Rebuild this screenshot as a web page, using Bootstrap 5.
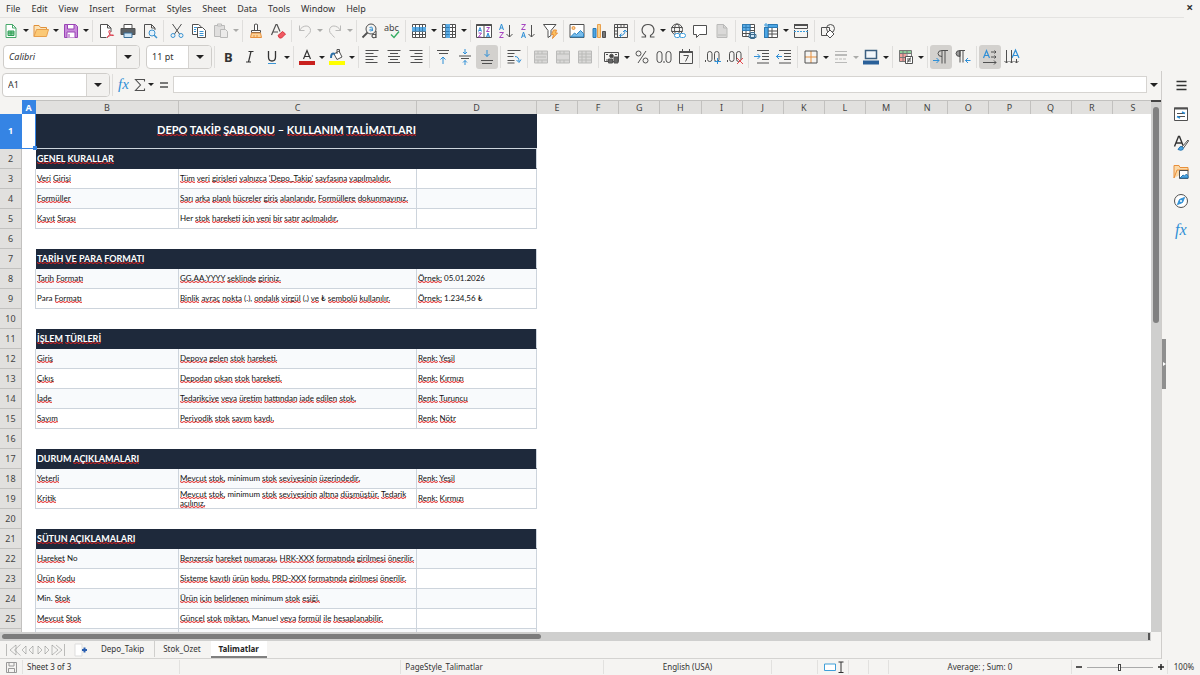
<!DOCTYPE html>
<html lang="tr">
<head>
<meta charset="utf-8">
<meta name="viewport" content="width=device-width, initial-scale=1">
<title>Talimatlar</title>
<link href="https://cdn.jsdelivr.net/npm/bootstrap@5.3.0/dist/css/bootstrap.min.css" rel="stylesheet">
<style>
body{font:9px/12px "Noto Sans","Open Sans",sans-serif;background:#f5f4f2;color:#333;height:100vh;overflow:hidden}
button,input{font:inherit;color:inherit}
button{border:0;background:none;padding:0}
a{color:inherit;text-decoration:none}
svg{display:block;overflow:visible;fill:none;stroke:#505050;stroke-width:1}
.menubar{height:18px;gap:11px;padding:1px 0 0 6px;margin-right:16px;border-bottom:1px solid #e4e3e1}
.closer{right:7px;top:3px;font-weight:700;font-size:12px;line-height:10px}
.tools{height:27px}
.tools.fmt{height:28px}
.tb{width:22px;height:24px;display:flex;align-items:center;justify-content:center;border-radius:3px;flex:none}
.tb.slim{width:18px}
.tb.slimmer{width:14px}
.tb svg{width:16px;height:16px}
.tb.on{background:#d3d1ce}
.dd{width:8px;height:24px;flex:none;display:flex;align-items:center;justify-content:center}
.dd::after,.cdrop::after{content:"";border:3px solid transparent;border-top:3px solid #222;border-bottom:0}
.off{opacity:.35}
.vr2{width:5px;height:22px;flex:none;background:linear-gradient(#dfdedc,#dfdedc) 2px 0/1px 100% no-repeat}
.combo{height:24px;border:1px solid #cfcdca;border-radius:4px;overflow:hidden;background:#fff;flex:none}
.combo.fontname{width:137px;margin-left:3px}
.combo.fontsize{width:66px;margin-left:6px}
.combo.namebox{width:108px}
.combo input{border:0;outline:0;padding:0 5px;min-width:0;flex:1;background:none}
.cdrop{width:23px;border-left:1px solid #d6d4d1;background:#f2f1ef;display:flex;align-items:center;justify-content:center}
.cdrop::after{border-width:4px 4px 0}
.cdrop.expand{width:14px;border:0;background:none}
.fbar{height:29px;padding:2px 0 4px 2px}
.fline{height:17px;border:1px solid #d6d4d1;background:#fff;outline:0}
.side{width:39px;border-left:1px solid #cfcdcb;padding-top:5px;gap:11px}
.side svg{width:16px;height:16px}
.side button{height:18px}
.handle{left:0;top:268px;width:4px;height:50px;background:#8f8f8f}
.handle::after{content:"";position:absolute;left:1px;top:23px;border:2px solid transparent;border-left:3px solid #fff;border-right:0}
.grid{table-layout:fixed;border-collapse:separate;border-spacing:0;width:calc(100% + 3px);background:#fff}
.grid .c-no{width:22px}.grid .c-a{width:14px}.grid .c-b{width:143px}.grid .c-c{width:238px}.grid .c-d{width:120px}
.gridwrap{width:0}
.grid thead th{height:14px;padding:0;background:#e1e0de;border-right:1px solid #c2c1bf;border-top:1px solid #c2c1bf;font-weight:400;text-align:center;line-height:12px;color:#444}
.grid tbody th{padding:0;background:#e1e0de;border-right:1px solid #c2c1bf;border-bottom:1px solid #c2c1bf;font-weight:400;text-align:center;color:#444}
.grid thead th.corner{background:#f5f4f2;border-color:#f5f4f2}
.grid thead th.cur,.grid tbody th.cur{background:#3584e4;color:#fff;font-weight:700;border-color:#3584e4}
.grid tbody tr{height:20px}
.grid tbody tr.title-row{height:35px}
.grid td{padding:0;font:8px/9px Lato,Carlito,sans-serif;color:#111;vertical-align:middle}
.grid td.cell{border-right:1px solid #cdd4dc;border-bottom:1px solid #cdd4dc;padding-left:1px}
.grid td.edge{border-right:1px solid #cdd4dc}
.grid tr.alt td.cell{background:#f8fafc}
.grid td.sec{background:#1e293b;color:#fff;font-weight:700;font-size:9px;border-color:#cdd4dc;border-bottom-color:#1e293b}
.grid td.ttl{background:#1e293b;color:#fff;font-weight:700;font-size:11px;line-height:14px;text-align:center;padding-bottom:3px;border-bottom:1px solid #cdd4dc}
.grid td.a1{border-right:1px solid #3584e4;border-bottom:1px solid #3584e4;position:relative}
.a1::after{content:"";position:absolute;right:-2px;bottom:-2px;width:4px;height:4px;background:#3584e4}
.sp{background:url("data:image/svg+xml,%3Csvg xmlns='http://www.w3.org/2000/svg' width='4' height='2'%3E%3Cpath d='M0 .5L2 1.5L4 .5' fill='none' stroke='%23e02020' stroke-width='1'/%3E%3C/svg%3E") left bottom/4px 2px repeat-x}
.vbar{width:10px;background:#cfcfce;padding:5px 2px 0;border-top:2px solid #444}
.vbar div{height:216px;border-radius:3px;background:#808080}
.hbar{height:9px;background:#cfcfce;padding:2px;margin-right:10px}
.hbar div{width:47%;height:5px;border-radius:3px;background:#7c7c7c}
.hbar i{width:2px;height:7px;background:#555;margin-right:-1px;margin-top:-1px}
.tabs{height:18px;border-bottom:1px solid #d4d3d1;font-size:8px}
.tabs svg.nav-arrows{margin-left:4px}
.tabs button{width:23px;padding-left:4px}
.tabs a{padding:0 10px;height:16px;line-height:16px;color:#333}
.tabs a+a{border-left:1px solid #d0cfcd;padding-left:8px}
.tabs a.live{background:#fff;font-weight:700;color:#222;padding:0 8px;border-left:0;border-bottom:2px solid #808080;height:17px}
.status{height:16px;font-size:8px;white-space:nowrap}
.status>*{height:14px;line-height:14px}
.status>*+*{border-left:1px solid #e2e1df}
.s-save{width:22px}.s-sheet{width:157px}.s-grow{flex:223 1 0}.s-page{flex:200 1 0}.s-lang{flex:169 1 0}
.s-ins{width:46px}.s-sel{width:31px}.s-small{width:20px}.s-sum{width:183px}.s-zoom{width:96px;gap:4px}.s-pct{width:33px}
.zoom{appearance:none;width:66px;height:10px;margin:0;background:linear-gradient(#aaa,#aaa) 0 50%/100% 1px no-repeat}
.zoom::-webkit-slider-thumb{appearance:none;width:3px;height:7px;border:1px solid #444;background:#fff}
</style>
</head>
<body class="d-flex flex-column">
<nav class="menubar d-flex align-items-center position-relative">
<a href="#">File</a><a href="#">Edit</a><a href="#">View</a><a href="#">Insert</a><a href="#">Format</a><a href="#">Styles</a><a href="#">Sheet</a><a href="#">Data</a><a href="#">Tools</a><a href="#">Window</a><a href="#">Help</a>
</nav>
<button class="closer position-absolute" aria-label="Close">×</button>

<div class="tools d-flex align-items-center" role="toolbar" aria-label="Standard">
<button class="tb" aria-label="New"><svg viewBox="0 0 16 16"><path d="M3 1.500h6.500l3.500 3.500v9.500h-10z" stroke="#47a86a" fill="#fff"/><path d="M9.500 1.500v3.500h3.500" stroke="#47a86a"/><path d="M5 8h6v4.500h-6zM5 10h6M8 8v4" stroke="#2e9e55" fill="#8fd1a5"/></svg></button><button class="dd" aria-label="New options"></button>
<button class="tb" aria-label="Open"><svg viewBox="0 0 16 16"><path d="M1 13.500v-11h5l1.500 2h6v2" stroke="#e0913a" fill="#fbe3b8"/><path d="M1 13.500l2.500-7h12l-2 7z" stroke="#e8a04c" fill="#fbc976"/></svg></button><button class="dd" aria-label="Open options"></button>
<button class="tb" aria-label="Save"><svg viewBox="0 0 16 16"><path d="M1.500 1.500h11l2 2v11h-13z" stroke="#9a45b5" fill="#c98adb"/><path d="M4.500 1.500h6.500v4.500h-6.500zM4 14.500v-5.500h8v5.500" fill="#fff" stroke="#9a45b5"/><path d="M6 11v3" stroke="#9a45b5"/></svg></button><button class="dd" aria-label="Save options"></button><span class="vr2"></span>
<button class="tb" aria-label="Export PDF"><svg viewBox="0 0 16 16"><path d="M13 9v-4l-3.500-3.500h-7v13h6" fill="#fff"/><path d="M9.500 1.500v3.500h3.500"/><path d="M9 14.500c3-2 4-7 2.500-7s-.5 5 3.500 5c2 0-1-2-6 2z" stroke="#dc3b4b"/></svg></button>
<button class="tb" aria-label="Print"><svg viewBox="0 0 16 16"><path d="M4 5v-3.500h8v3.500" fill="#fff"/><path d="M1 5.500h14v6h-14z" fill="#5b6165"/><path d="M4 10h8v4.500h-8z" fill="#cfe6f7" stroke="#3a6f98"/></svg></button>
<button class="tb" aria-label="Print preview"><svg viewBox="0 0 16 16"><path d="M8 14.500h-5.500v-13h7l3.500 3.500v2M9.500 1.500v3.500h3.500"/><circle cx="10" cy="10" r="3" stroke="#3f94cf" fill="#e3f1fb"/><path d="M12 12l3 3" stroke="#3f94cf" stroke-width="1.500"/></svg></button><span class="vr2"></span>
<button class="tb" aria-label="Cut"><svg viewBox="0 0 16 16"><path d="M3.500 1l7 10M12.500 1l-7 10"/><circle cx="4" cy="12.500" r="2" stroke="#3a94d4"/><circle cx="12" cy="12.500" r="2" stroke="#3a94d4"/></svg></button>
<button class="tb" aria-label="Copy"><svg viewBox="0 0 16 16"><path d="M6 11.500h-4.500v-10h6l3 2.500" fill="#fff"/><path d="M6.500 4.500h5l3 3v7h-8z" fill="#fff"/><path d="M3 4.500h3M3 6.500h2M3 8.500h2M8.500 8.500h4M8.500 10.500h4M8.500 12.500h4" stroke="#3a94d4"/></svg></button>
<button class="tb off" aria-label="Paste"><svg viewBox="0 0 16 16"><path d="M7 13.500h-5.500v-11h10v4" fill="#bbb"/><path d="M4.500 1h4v2h-4zM7.500 6.500h5l2 2v6h-7z" fill="#ddd"/></svg></button><button class="dd off" aria-label="Paste options"></button><span class="vr2"></span>
<button class="tb" aria-label="Clone formatting"><svg viewBox="0 0 16 16"><path d="M6.500 7v-5.500q1.500-1 3 0v5.500M3.500 7.500h9v2h-9z" fill="#fff"/><path d="M3.500 10l-1 4.500h11l-1-4.500z" stroke="#e8903c" fill="#fbd39a"/><path d="M6 12v2M9 12v2" stroke="#e8903c"/></svg></button>
<button class="tb" aria-label="Clear formatting"><svg viewBox="0 0 16 16"><path d="M1.500 12l4.500-10.500h1l3 7M3 9h5" stroke-width="1.200"/><path d="M8 12.500l4.500-4 3 2.500-4 4h-2z" fill="#ef5a62" stroke="#d9333f"/></svg></button><span class="vr2"></span>
<button class="tb off" aria-label="Undo"><svg viewBox="0 0 16 16"><path d="M2.500 2.500v5h5M2.500 7.500c3-6 11-6 11 0 0 3-3 4-5 7"/></svg></button><button class="dd off" aria-label="Undo list"></button>
<button class="tb off" aria-label="Redo"><svg viewBox="0 0 16 16"><path d="M13.500 2.500v5h-5M13.500 7.500c-3-6-11-6-11 0 0 3 3 4 5 7"/></svg></button><button class="dd off" aria-label="Redo list"></button><span class="vr2"></span>
<button class="tb" aria-label="Find and replace"><svg viewBox="0 0 16 16"><circle cx="9" cy="6" r="5"/><path d="M5.500 9.500l-5 5" stroke-width="1.800"/><path d="M7.500 4.500q3-1.500 3 1v2.500M10.500 6q-3 0-3 1.200t3 .3" stroke="#3a94d4"/><path d="M14 8v7M14 12q-4-2-4 1t4 1" stroke="#333"/></svg></button>
<button class="tb" aria-label="Spelling"><svg viewBox="0 0 16 16"><text x="0" y="8" font-size="9" fill="#444" stroke="none">abc</text><path d="M7 11.500l3 3 5-6" stroke="#35ad63" stroke-width="1.400"/></svg></button><span class="vr2"></span>
<button class="tb" aria-label="Row"><svg viewBox="0 0 16 16"><path d="M1.500 1.500h13v13h-13zM1.500 4.500h13M1.500 8.500h13M1.500 11.500h13M4.500 1.500v13M8.500 1.500v13M11.500 1.500v13" fill="#fff"/><path d="M1 4h14v4.500h-14z" fill="#5babe4" stroke="none"/><path d="M4.500 4v4M8.500 4v4M11.500 4v4" stroke="#2f7cb5"/></svg></button><button class="dd" aria-label="Row options"></button>
<button class="tb" aria-label="Column"><svg viewBox="0 0 16 16"><path d="M1.500 1.500h13v13h-13zM1.500 4.500h13M1.500 8.500h13M1.500 11.500h13M4.500 1.500v13M8.500 1.500v13M11.500 1.500v13" fill="#fff"/><path d="M4.500 1h4.500v14h-4.500z" fill="#5babe4" stroke="none"/><path d="M4.500 4.500h4M4.500 8.500h4M4.500 11.500h4" stroke="#2f7cb5"/></svg></button><button class="dd" aria-label="Column options"></button><span class="vr2"></span>
<button class="tb" aria-label="Sort"><svg viewBox="0 0 16 16"><path d="M.5 1.500h15v13h-15zM8 1.500v13" fill="#fff"/><path d="M.5 2h15" stroke-width="2"/><path d="M2.500 8.500l1.500-4 1.500 4M3 7.500h2M10.500 14l1.500-4 1.500 4M11 13h2" stroke="#2f8fd6"/><path d="M2.500 10h3l-3 4h3M10.500 4.500h3l-3 4h3" stroke="#a646c0"/></svg></button>
<button class="tb" aria-label="Sort ascending"><svg viewBox="0 0 16 16"><path d="M1.500 7l2-6 2 6M2 5h3" stroke="#2f8fd6"/><path d="M1.500 9.500h4l-4 5h4" stroke="#a646c0"/><path d="M11.500 2v12M8.500 11l3 3 3-3"/></svg></button>
<button class="tb" aria-label="Sort descending"><svg viewBox="0 0 16 16"><path d="M1.500 15l2-6 2 6M2 13h3" stroke="#2f8fd6"/><path d="M1.500 1.500h4l-4 5h4" stroke="#a646c0"/><path d="M11.500 2v12M8.500 11l3 3 3-3"/></svg></button>
<button class="tb" aria-label="AutoFilter"><svg viewBox="0 0 16 16"><path d="M1.500 1.500h12.500l-5 6v5l-3 2v-7z" fill="#fff"/><path d="M11.500 7h3l-1 3h2l-5 5.500 1-4h-2z" fill="#fbc05e" stroke="#e8903c"/></svg></button><span class="vr2"></span>
<button class="tb" aria-label="Insert image"><svg viewBox="0 0 16 16"><path d="M1 1.500h14v13h-14z" fill="#fff"/><circle cx="4.500" cy="5" r="1.500" stroke="#e8903c" fill="#fbd39a"/><path d="M1.500 14l4-4 2 1.500 4-4 3 3v3.500z" fill="#78bdec" stroke="#2f86c4"/></svg></button>
<button class="tb" aria-label="Insert chart"><svg viewBox="0 0 16 16"><path d="M2 5.500h3v9h-3z" fill="#4ca6e4" stroke="#2a78b3"/><path d="M6.500 1.500h3v13h-3z" fill="#fbd08c" stroke="#e8a04c"/><path d="M11.500 8.500h3v6h-3z" fill="#777"/></svg></button>
<button class="tb" aria-label="Pivot table"><svg viewBox="0 0 16 16"><path d="M1.500 1.500h13v13h-13zM1.500 4.500h13M4.500 1.500v13M8 1.500v3M11 1.500v3M1.500 8h3M1.500 11h3"/><path d="M7 12.500q5 0 5-5M8.500 10.500l-2 2 2 2M10 9l2-2 2 2" stroke="#2f8fd6"/></svg></button><span class="vr2"></span>
<button class="tb" aria-label="Special character"><svg viewBox="0 0 16 16"><path d="M1.500 14h4v-1.500c-6-4-3.500-11 2.500-11s8.500 7 2.500 11v1.500h4" stroke-width="1.200"/></svg></button><button class="dd" aria-label="Characters"></button>
<button class="tb" aria-label="Hyperlink"><svg viewBox="0 0 16 16"><circle cx="7" cy="6.500" r="5.500"/><ellipse cx="7" cy="6.500" rx="2.500" ry="5.500"/><path d="M1.500 4.500h11M1.500 8.500h11"/><path d="M5 10.500h5v4h-5zM10.500 10.500h5v4h-5z" fill="#fff" stroke="none"/><rect x="4.500" y="10.500" width="5.500" height="4" rx="2" stroke="#3a9bdc"/><rect x="9.500" y="10.500" width="6" height="4" rx="2" stroke="#3a9bdc"/></svg></button>
<button class="tb" aria-label="Comment"><svg viewBox="0 0 16 16"><path d="M1.500 2.500h13v9h-7l-3 3v-3h-3z" fill="#fff"/></svg></button>
<button class="tb off" aria-label="Headers and footers"><svg viewBox="0 0 16 16"><path d="M3 1.500h6.500l3.500 3.500v9.500h-10z" fill="#aaa"/><path d="M4 12h8M9.500 1.500v3.500h3.500"/></svg></button><span class="vr2"></span>
<button class="tb" aria-label="Print area"><svg viewBox="0 0 16 16"><path d="M1.500 1.500h12v12h-12zM1.500 4.500h12M1.500 7.500h12M1.500 10.500h12M5 1.500v12M9 1.500v12" fill="#fff"/><path d="M1.500 1.500h7.500v6h-7.500zM1.500 4.500h7.500M5 1.500v6" fill="#5babe4" stroke="#2f7cb5"/><path d="M8 11.500h7v3h-7zM9.500 9.500h4v6h-4z" fill="#cfe6f7" stroke="#3c6c8e"/></svg></button>
<button class="tb" aria-label="Freeze"><svg viewBox="0 0 16 16"><path d="M1.500 4.500h13v10h-13zM5 4.500v10M9 4.500v10M1.500 8h13M1.500 11h13" fill="#fff"/><path d="M5 1.500h9.500v3h-9.500zM1.500 4.500h3.500v10h-3.500z" fill="#4ca6e4" stroke="#2a78b3"/><path d="M3 0v4M1 2h4" stroke="#3a9bdc"/></svg></button><button class="dd" aria-label="Freeze options"></button>
<button class="tb" aria-label="Split"><svg viewBox="0 0 16 16"><path d="M1.500 1.500h13v4h-13zM1.500 7v7.500h13v-7.500"/><path d="M1 2h14" stroke-width="2"/><path d="M1 8.500h14" stroke="#3a9bdc" stroke-dasharray="2 1"/></svg></button><span class="vr2"></span>
<button class="tb" aria-label="Draw functions"><svg viewBox="0 0 16 16"><path d="M1.500 4.500h8v8h-8z"/><circle cx="10.500" cy="5.500" r="4"/><path d="M10 7l4 4-4 4-4-4z" fill="#fff"/></svg></button>
</div>

<div class="tools fmt d-flex align-items-center" role="toolbar" aria-label="Formatting">
<div class="combo fontname d-flex"><input class="fst-italic" aria-label="Font name" value="Calibri"><button class="cdrop" aria-label="Fonts"></button></div>
<div class="combo fontsize d-flex"><input aria-label="Font size" value="11 pt"><button class="cdrop" aria-label="Sizes"></button></div><span class="vr2"></span>
<button class="tb" aria-label="Bold"><svg viewBox="0 0 16 16"><text x="4" y="13" font-size="13" font-weight="700" fill="#333" stroke="none">B</text></svg></button>
<button class="tb" aria-label="Italic"><svg viewBox="0 0 16 16"><path d="M6.500 2.500h5M4 13h5M9 2.500l-2.500 10.500" stroke="#333" stroke-width="1.200"/></svg></button>
<button class="tb" aria-label="Underline"><svg viewBox="0 0 16 16"><path d="M4.500 2v6q0 4 3.500 4t3.500-4v-6" stroke="#333" stroke-width="1.300"/><path d="M4 14.500h8" stroke="#3a94d4"/></svg></button><button class="dd" aria-label="Underline styles"></button><span class="vr2"></span>
<button class="tb" aria-label="Font color"><svg viewBox="0 0 16 16"><path d="M4.500 10l3.500-8.500 3.500 8.500M5.500 7.500h5" stroke="#333" stroke-width="1.200"/><path d="M0 14h16" stroke="#c9211e" stroke-width="4"/></svg></button><button class="dd" aria-label="Font colors"></button>
<button class="tb" aria-label="Background color"><svg viewBox="0 0 16 16"><path d="M5 5l5-3 3 6-5 2.500zM8 5v-4.500h2.500v3" fill="#fff"/><path d="M2 9q0-6 4-4" stroke="#2a6fa8" stroke-width="2"/><path d="M0 14h16" stroke="#ff0" stroke-width="4"/></svg></button><button class="dd" aria-label="Background colors"></button><span class="vr2"></span>
<button class="tb" aria-label="Align left"><svg viewBox="0 0 16 16"><path d="M1.500 1.500h13M1.500 4.500h8M1.500 7.500h12M1.500 10.500h8M1.500 13.500h12"/></svg></button>
<button class="tb" aria-label="Align center"><svg viewBox="0 0 16 16"><path d="M1.500 1.500h13M4 4.500h8M2 7.500h12M4 10.500h8M2 13.500h12"/></svg></button>
<button class="tb" aria-label="Align right"><svg viewBox="0 0 16 16"><path d="M1.500 1.500h13M6.500 4.500h8M2.500 7.500h12M6.500 10.500h8M2.500 13.500h12"/></svg></button><span class="vr2"></span>
<button class="tb" aria-label="Align top"><svg viewBox="0 0 16 16"><path d="M2 1.500h12M4 4.500h9"/><path d="M8 15v-7M5.500 10.500l2.500-2.500 2.500 2.500" stroke="#2f8fd6"/></svg></button>
<button class="tb" aria-label="Center vertically"><svg viewBox="0 0 16 16"><path d="M2 7h12M4 9.500h8"/><path d="M8 0v5M6 3l2 2 2-2M8 16v-4.500M6 13.500l2-2 2 2" stroke="#2f8fd6"/></svg></button>
<button class="tb on" aria-label="Align bottom"><svg viewBox="0 0 16 16"><path d="M2 11.500h12M3 14.500h10"/><path d="M8 1v6.500M5.500 5l2.500 2.500 2.500-2.500" stroke="#2f8fd6"/></svg></button><span class="vr2"></span>
<button class="tb" aria-label="Wrap text"><svg viewBox="0 0 16 16"><path d="M1.500 1.500h13M1.500 4.500h7M1.500 7.500h6M1.500 11.500h7M1.500 14h7"/><path d="M9 7.500q4 0 4 5M10.500 11l2.500 2.500 2-3" stroke="#2f8fd6"/></svg></button><span class="vr2"></span>
<button class="tb off" aria-label="Merge and center"><svg viewBox="0 0 16 16"><path d="M1.500 2h13v12h-13zM1.500 5h13M1.500 11h13M5 2v3M9 2v3M5 11v3M9 11v3M3 8h10" fill="#aaa"/></svg></button>
<button class="tb off" aria-label="Merge cells"><svg viewBox="0 0 16 16"><path d="M1.500 2h13v12h-13zM1.500 5h13M1.500 11h13M5 2v3M9 2v3M5 11v3M9 11v3" fill="#aaa"/></svg></button>
<button class="tb off" aria-label="Split cells"><svg viewBox="0 0 16 16"><path d="M1.500 2h13v12h-13zM1.500 5h13M1.500 11h13M5 2v12M9 2v12M1.500 8h13" fill="#aaa"/></svg></button><span class="vr2"></span>
<button class="tb" aria-label="Currency"><svg viewBox="0 0 16 16"><path d="M.5 3.500h14v9h-14z"/><circle cx="7.500" cy="7" r="1.800" fill="#444"/><path d="M2 5.500h2M11 5.500h2M2 11h2"/><path d="M4.500 10h4v4h-4zM10 8h4v6h-4z" fill="#666"/></svg></button><button class="dd" aria-label="Currencies"></button>
<button class="tb" aria-label="Percent"><svg viewBox="0 0 16 16"><circle cx="4.500" cy="4.500" r="2.500"/><circle cx="11.500" cy="11.500" r="2.500"/><path d="M12 2l-8 12"/></svg></button>
<button class="tb" aria-label="Number"><svg viewBox="0 0 16 16"><rect x="1" y="2.500" width="5" height="11" rx="2.500"/><rect x="10" y="2.500" width="5" height="11" rx="2.500"/><path d="M8 12v2"/></svg></button>
<button class="tb" aria-label="Date"><svg viewBox="0 0 16 16"><path d="M1.500 2.500h13v12h-13zM4.500 0v3M11.500 0v3M5.500 6.500h5l-3 6"/><path d="M1.500 3h13" stroke-width="2"/></svg></button><span class="vr2"></span>
<button class="tb" aria-label="Add decimal"><svg viewBox="0 0 16 16"><path d="M.5 11v2"/><rect x="2.500" y="2.500" width="4.500" height="10" rx="2.200"/><rect x="9.500" y="2.500" width="4.500" height="10" rx="2.200"/><path d="M12.500 9v6M9.500 12.500h6.500" stroke="#2f8fd6"/></svg></button>
<button class="tb" aria-label="Delete decimal"><svg viewBox="0 0 16 16"><path d="M.5 11v2"/><rect x="2.500" y="2.500" width="4.500" height="10" rx="2.200"/><rect x="9.500" y="2.500" width="4.500" height="10" rx="2.200"/><path d="M10 9l6 6M16 9l-6 6" stroke="#e5484d"/></svg></button><span class="vr2"></span>
<button class="tb" aria-label="Increase indent"><svg viewBox="0 0 16 16"><path d="M3 1.500h12M8 4.500h7M8 7.500h7M8 10.500h7M3 14h12"/><path d="M0 7.500h6M3.500 5l2.500 2.500-2.500 2.500" stroke="#2f8fd6"/></svg></button>
<button class="tb" aria-label="Decrease indent"><svg viewBox="0 0 16 16"><path d="M3 1.500h12M8 4.500h7M8 7.500h7M8 10.500h7M3 14h12"/><path d="M0 7.500h6M3 5l-2.500 2.500 2.500 2.500" stroke="#2f8fd6"/></svg></button><span class="vr2"></span>
<button class="tb" aria-label="Borders"><svg viewBox="0 0 16 16"><path d="M8 2v12M2 8h12" stroke="#e8903c"/><path d="M2 2h12v12h-12z"/></svg></button><button class="dd" aria-label="Border types"></button>
<button class="tb off" aria-label="Border style"><svg viewBox="0 0 16 16"><path d="M2 2.500h12M2 13.500h12"/><path d="M2 6h12" stroke-width="2"/><path d="M2 10h12" stroke-dasharray="3 1"/></svg></button><button class="dd off" aria-label="Border styles"></button>
<button class="tb" aria-label="Border color"><svg viewBox="0 0 16 16"><path d="M2.500 1.500h11v8h-11z" stroke="#3c5f80" stroke-width="1.500" fill="#f2f6fa"/><path d="M0 13.500h16" stroke="#2a6099" stroke-width="4"/></svg></button><button class="dd" aria-label="Border colors"></button><span class="vr2"></span>
<button class="tb" aria-label="Conditional"><svg viewBox="0 0 16 16"><path d="M1 1h12v4h-12z" fill="#8bd09a" stroke="none"/><path d="M1 5h7v7h-7z" fill="#f4a09c" stroke="none"/><path d="M1.500 1.500h12v11h-12zM1.500 4.500h12M1.500 8.500h12M5 1.500v11M9 1.500v11" stroke="#777"/><path d="M7.500 7.500h7v7h-7z" fill="#fff"/><path d="M9 10h4M9 12h4M12.500 8.500l-3 5"/></svg></button><button class="dd" aria-label="Conditional options"></button><span class="vr2"></span>
<button class="tb on" aria-label="Left to right"><svg viewBox="0 0 16 16"><path d="M15 1.500h-6q-4 0-4 3t4 3M9 1.500v13M12 1.500v13"/><path d="M0 11.500h6M3.500 9l2.500 2.500-2.500 2.500" stroke="#2f8fd6"/></svg></button>
<button class="tb" aria-label="Right to left"><svg viewBox="0 0 16 16"><path d="M5 1.500q-4 0-4 3t4 3z" fill="#999"/><path d="M10 1.500h-5v12M8 1.500v12"/><path d="M15.500 11.500h-5M13 9l-2.500 2.500 2.500 2.500" stroke="#2f8fd6"/></svg></button><span class="vr2"></span>
<button class="tb on" aria-label="Horizontal text"><svg viewBox="0 0 16 16"><path d="M1.500 9l3-7.500 3 7.500M2.500 6.500h4" stroke="#2f8fd6" stroke-width="1.200"/><path d="M9 3h5M12.500 1.500l1.500 1.500-1.500 1.500M9 8h5M12.500 6.500l1.500 1.500-1.500 1.500M1 13.500h13M12 11.500l2 2-2 2"/></svg></button>
<button class="tb" aria-label="Vertical text"><svg viewBox="0 0 16 16"><path d="M8 9l3.500-8 3.500 8M9.500 6.500h4" stroke="#2f8fd6" stroke-width="1.200"/><path d="M2.500 1v13M.5 12l2 2 2-2M7.500 1v13M5.500 12l2 2 2-2M12.500 10v4M10.500 12l2 2 2-2"/></svg></button>
</div>

<div class="d-flex flex-fill overflow-hidden">
<main class="d-flex flex-column flex-fill overflow-hidden">
<div class="fbar d-flex align-items-center">
<div class="combo namebox d-flex"><input aria-label="Name box" value="A1"><button class="cdrop" aria-label="Named ranges"></button></div><span class="vr2"></span>
<button class="tb slim" aria-label="Function wizard"><svg viewBox="0 0 16 16"><text x="2" y="12" font-family="Liberation Serif" font-style="italic" font-size="15" fill="#2f8fd6" stroke="none">fx</text></svg></button>
<button class="tb slimmer" aria-label="Sum"><svg viewBox="0 0 16 16"><path d="M12.500 4.500v-2h-9l5 5.500-5 5.500h9v-2" stroke-width="1.100"/></svg></button><button class="dd" aria-label="Sum options"></button>
<button class="tb slim" aria-label="Formula"><svg viewBox="0 0 16 16"><path d="M4 6h8M4 10h8" stroke-width="1.700"/></svg></button>
<input class="fline flex-fill" aria-label="Input line"><button class="cdrop expand" aria-label="Expand"></button>
</div>
<div class="d-flex flex-fill overflow-hidden">
<div class="gridwrap flex-fill overflow-hidden">
<table class="grid"><colgroup><col class="c-no"><col class="c-a"><col class="c-b"><col class="c-c"><col class="c-d"></colgroup>
<thead><tr id="letters"><th class="corner"></th></tr></thead><tbody id="rows"></tbody></table>
</div>
<div class="vbar"><div></div></div>
</div>
<div class="hbar d-flex justify-content-between"><div></div><i></i></div>
<div class="tabs d-flex">
<svg class="off nav-arrows" width="64" height="16" viewBox="0 0 64 16" aria-hidden="true"><path d="M2.500 3v12M12 4l-6 5 6 5zM16.500 3.500l-6 5.500 6 5.500M22 5l-4 4 4 4zM29 5l-4 4 4 4zM34 5l4 4-4 4zM41 5l4 4-4 4zM48 4l6 5-6 5zM52 4l6 5-6 5M60.500 3v12"/></svg>
<button aria-label="Add sheet"><svg viewBox="0 0 16 14" width="16" height="14"><path d="M3 1h7v12h-7z" fill="#fff" stroke="#ddd"/><path d="M12.500 4.500v5M10 7h5" stroke="#2a5fb0" stroke-width="2"/></svg></button>
<a href="#">Depo_Takip</a><a href="#">Stok_Ozet</a><a href="#" class="live">Talimatlar</a>
</div>
</main>
<aside class="side d-flex flex-column align-items-center position-relative">
<span class="handle position-absolute"></span>
<button aria-label="Settings"><svg viewBox="0 0 16 16"><path d="M3.500 4.500h10M3.500 8.500h10M3.500 12.500h10" stroke="#333" stroke-width="1.500"/></svg></button>
<button aria-label="Properties"><svg viewBox="0 0 16 16"><path d="M1.500 2h13v12.500h-13z" fill="#fff"/><path d="M1 2.500h14" stroke-width="2"/><path d="M4 7.500h8M4 10.500h8" /><path d="M9 6l3 1.500M7 12l-3-1.500" stroke="#2f8fd6" stroke-width="1.500"/></svg></button>
<button aria-label="Styles"><svg viewBox="0 0 16 16"><path d="M1.500 11.500l4-10h1l3.500 9M3 8h5.500" stroke="#333" stroke-width="1.400"/><path d="M15 5l-6 7 1.500 1 5-7z" fill="#fff"/><path d="M5 14.500q2-4 4-3t1 3q-2 1.500-5 0z" fill="#4ca6e4" stroke="#2a78b3"/></svg></button>
<button aria-label="Gallery"><svg viewBox="0 0 16 16"><path d="M1 14v-12.500h5l1 2h8v3M1 14l3-8h12" stroke="#e8903c" fill="#fbd9a8"/><path d="M6.500 6.500h8.500v8h-8.500z" fill="#fff"/><path d="M7 14l3-3 1.500 1 2-2 1.500 2v2z" fill="#4ca6e4" stroke="#2a78b3"/></svg></button>
<button aria-label="Navigator"><svg viewBox="0 0 16 16"><circle cx="8" cy="8" r="6.500" fill="#fff"/><path d="M11.500 4.500l-2 5-5 2 2-5z" fill="#3a94d4" stroke="#2f8fd6"/><circle cx="8" cy="8" r="1" fill="#fff" stroke="none"/></svg></button>
<button aria-label="Functions"><svg viewBox="0 0 16 16"><text x="2" y="13" font-family="Liberation Serif" font-style="italic" font-size="16" fill="#2f8fd6" stroke="none">fx</text></svg></button>
</aside>
</div>

<footer class="status d-flex align-items-center">
<div class="s-save ps-1"><svg width="14" height="14" viewBox="0 0 14 14"><path d="M2.500 2.500h10v10h-10zM5 2.500v3.500h5v-3.500M4.500 12.500v-4h6v4" stroke="#999"/></svg></div>
<div class="s-sheet ps-1">Sheet 3 of 3</div>
<div class="s-grow"></div>
<div class="s-page ps-1">PageStyle_Talimatlar</div>
<div class="s-lang text-center">English (USA)</div>
<div class="s-ins"></div>
<div class="s-sel"><svg width="30" height="14" viewBox="0 0 30 14"><path d="M6.500 4h11v6.500h-11z" stroke="#3f9fd8" fill="#fff"/><path d="M20.500 2h5M23 2v10.500M20.500 12.500h5" stroke="#333"/></svg></div>
<div class="s-small"></div><div class="s-small"></div>
<div class="s-sum text-center">Average: ; Sum: 0</div>
<div class="s-zoom d-flex align-items-center justify-content-center"><button aria-label="Zoom out"><svg width="8" height="8" viewBox="0 0 8 8"><path d="M1 4h6" stroke="#222" stroke-width="1.500"/></svg></button><input class="zoom" type="range" aria-label="Zoom"><button aria-label="Zoom in"><svg width="8" height="8" viewBox="0 0 8 8"><path d="M1 4h6M4 1v6" stroke="#222" stroke-width="1.500"/></svg></button></div>
<div class="s-pct text-center">100%</div>
</footer>
<script>
// Cells are [B, C, D]; a string is a section heading, null an empty row.
// Words the spell checker accepts are wrapped in braces.
const data=[
"GENEL KURALLAR",
["Veri Girişi","Tüm veri girişleri yalnızca 'Depo_Takip' sayfasına yapılmalıdır.",""],
["Formüller","Sarı arka planlı hücreler giriş alanlarıdır. Formüllere dokunmayınız.",""],
["Kayıt Sırası","{Her} stok hareketi için yeni bir satır açılmalıdır.",""],
null,
"TARİH VE PARA FORMATI",
["Tarih Formatı","GG.AA.YYYY şeklinde giriniz.","Örnek: {05.01.2026}"],
["{Para} Formatı","Binlik ayraç nokta {(.),} ondalık virgül {(,)} ve {₺} sembolü kullanılır.","Örnek: {1.234,56} {₺}"],
null,
"İŞLEM TÜRLERİ",
["Giriş","Depoya gelen stok hareketi.","Renk: Yeşil"],
["Çıkış","Depodan çıkan stok hareketi.","Renk: Kırmızı"],
["İade","Tedarikçiye veya üretim hattından iade edilen stok.","Renk: Turuncu"],
["Sayım","Periyodik stok sayım kaydı.","Renk: Nötr"],
null,
"{DURUM} AÇIKLAMALARI",
["Yeterli","Mevcut stok, {minimum} stok seviyesinin üzerindedir.","Renk: Yeşil"],
["Kritik","Mevcut stok, {minimum} stok seviyesinin altına düşmüştür. Tedarik açılınız.","Renk: Kırmızı"],
null,
"SÜTUN AÇIKLAMALARI",
["Hareket {No}","Benzersiz hareket numarası. HRK-XXX formatında girilmesi önerilir.",""],
["Ürün Kodu","Sisteme kayıtlı ürün kodu. PRD-XXX formatında girilmesi önerilir.",""],
["{Min.} Stok","Ürün için belirlenen {minimum} stok eşiği.",""],
["Mevcut Stok","Güncel stok miktarı. {Manuel} veya formül ile hesaplanabilir.",""]];
const mark=t=>t.split(" ").filter(Boolean).map(w=>w[0]=="{"?w.slice(1,-1):w=="–"?w:`<span class="sp">${w}</span>`).join(" ");
document.getElementById("letters").innerHTML+=[..."ABCDEFGHIJKLMNOPQRS"].map((c,i)=>`<th${i?"":' class="cur"'}>${c}</th>`).join("");
let h=`<tr class="title-row"><th class="cur">1</th><td class="a1"></td><td class="ttl" colspan="3">${mark("DEPO TAKİP ŞABLONU – KULLANIM TALİMATLARI")}</td><td colspan="15"></td></tr>`;
data.forEach((r,i)=>{
 const n=i+2, head=`<th>${n}</th>`;
 if(!r) h+=`<tr>${head}<td colspan="19"></td></tr>`;
 else if(typeof r=="string") h+=`<tr>${head}<td></td><td class="cell sec" colspan="3">${mark(r)}</td><td colspan="15"></td></tr>`;
 else h+=`<tr class="${n%2?"":"alt"}">${head}<td class="edge"></td>${r.map(c=>`<td class="cell">${mark(c)}</td>`).join("")}<td colspan="15"></td></tr>`;
});
h+=`<tr class="alt"><th></th><td class="edge"></td><td class="cell"></td><td class="cell"></td><td class="cell"></td><td colspan="15"></td></tr>`;
document.getElementById("rows").innerHTML=h;
</script>
<script src="https://cdn.jsdelivr.net/npm/bootstrap@5.3.0/dist/js/bootstrap.bundle.min.js"></script>
</body>
</html>
